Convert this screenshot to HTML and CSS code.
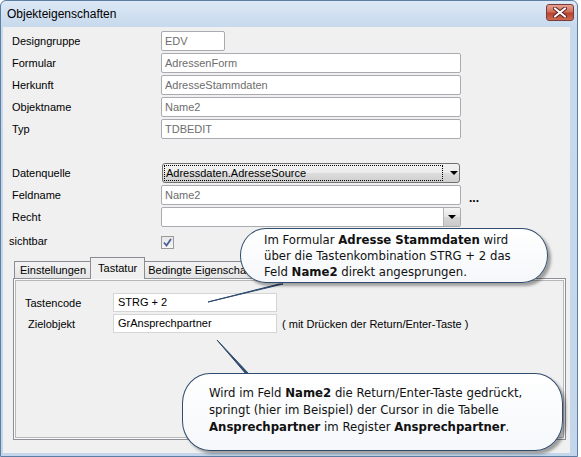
FILE: index.html
```html
<!DOCTYPE html>
<html>
<head>
<meta charset="utf-8">
<title>Objekteigenschaften</title>
<link rel="stylesheet" href="styles.css">
</head>
<body>
<div class="window">
  <div class="titlebar">
    <span class="title">Objekteigenschaften</span>
    <span class="close">
      <svg width="14" height="11" viewBox="0 0 14 11"><path d="M2 1.5 L12 9.5 M12 1.5 L2 9.5" stroke="#5a1e1e" stroke-width="4" stroke-linecap="round"/><path d="M2 1.5 L12 9.5 M12 1.5 L2 9.5" stroke="#fff" stroke-width="2.2" stroke-linecap="round"/></svg>
    </span>
  </div>
  <div class="client">
    <div class="form">
      <div class="row"><span class="lbl">Designgruppe</span><div class="field w64">EDV</div></div>
      <div class="row"><span class="lbl">Formular</span><div class="field w300">AdressenForm</div></div>
      <div class="row"><span class="lbl">Herkunft</span><div class="field w300">AdresseStammdaten</div></div>
      <div class="row"><span class="lbl">Objektname</span><div class="field w300">Name2</div></div>
      <div class="row"><span class="lbl">Typ</span><div class="field w300">TDBEDIT</div></div>
      <div class="row gapbefore"><span class="lbl">Datenquelle</span>
        <div class="combo">
          <span class="focus">Adressdaten.AdresseSource</span>
          <span class="arrow"></span>
        </div>
      </div>
      <div class="row"><span class="lbl">Feldname</span><div class="field w300">Name2</div><span class="dots">...</span></div>
      <div class="row"><span class="lbl">Recht</span>
        <div class="field w300 dropfield"><span class="dropbtn"><span class="arrow"></span></span></div>
      </div>
      <div class="row checkrow"><span class="lbl lbl-shift">sichtbar</span>
        <span class="check"><svg width="11" height="11" viewBox="0 0 11 11"><path d="M2 5.5 L4.5 8.5 L9 2" fill="none" stroke="#4b5f9a" stroke-width="1.8"/></svg></span>
      </div>
    </div>
    <div class="tabs">
      <span class="tab">Einstellungen</span>
      <span class="tab sel">Tastatur</span>
      <span class="tab">Bedingte Eigenschaften</span>
    </div>
    <div class="panel">
      <div class="prow"><span class="plbl">Tastencode</span><div class="pfield">STRG + 2</div></div>
      <div class="prow"><span class="plbl plbl-shift">Zielobjekt</span><div class="pfield">GrAnsprechpartner</div><span class="hint">( mit Drücken der Return/Enter-Taste )</span></div>
    </div>
  </div>
</div>
<svg class="tails" width="581" height="457" viewBox="0 0 581 457">
  <path d="M208 302 L279 284 L283 284 Z" fill="#2f4b6e" stroke="#2f4b6e" stroke-width="1"/>
  <path d="M217 340 L246 374 L249 374 Z" fill="#2f4b6e" stroke="#2f4b6e" stroke-width="1"/>
</svg>
<div class="callout c1">
  Im Formular <b>Adresse Stammdaten</b> wird<br>
  über die Tastenkombination STRG + 2 das<br>
  Feld <b>Name2</b> direkt angesprungen.
</div>
<div class="callout c2">
  Wird im Feld <b>Name2</b> die Return/Enter-Taste gedrückt,<br>
  springt (hier im Beispiel) der Cursor in die Tabelle<br>
  <b>Ansprechpartner</b> im Register <b>Ansprechpartner</b>.
</div>
</body>
</html>
```

FILE: styles.css
```css
* { box-sizing: border-box; }
html, body { margin: 0; padding: 0; }
body {
  width: 581px;
  height: 457px;
  background: #ffffff;
  font-family: "Liberation Sans", Arial, sans-serif;
  font-size: 11px;
  color: #000;
  position: relative;
  overflow: hidden;
}
.window {
  width: 578px;
  height: 457px;
  border: 1px solid #5d7ea3;
  border-radius: 6px 6px 0 0;
  background: linear-gradient(#dce8f5, #c7d9ed 26px, #c3d6eb);
  display: flex;
  flex-direction: column;
}
.titlebar {
  height: 26px;
  display: flex;
  align-items: center;
  justify-content: space-between;
  padding: 0 3px 0 6px;
}
.title { font-size: 12px; color: #000; }
.close {
  width: 28px;
  height: 17px;
  margin-top: -4px;
  border: 1px solid #7a3a3a;
  border-radius: 3px;
  background: linear-gradient(#e8a393, #d0705c 45%, #b8432f 55%, #cf6a50);
  display: flex;
  align-items: center;
  justify-content: center;
}
.client {
  margin: 0 7px 3px 2px;
  height: 426px;
  background: #f0f0f0;
}
.form {
  padding: 4px 0 0 9px;
  display: flex;
  flex-direction: column;
  gap: 2px;
}
.row { display: flex; align-items: center; height: 20px; }
.gapbefore { margin-top: 22px; }
.lbl { width: 149px; flex: none; }
.lbl-shift { margin-left: -3px; width: 152px; }
.field {
  height: 20px;
  border: 1px solid #a9abb0;
  border-radius: 2px;
  background: #fff;
  color: #6d6d6d;
  padding: 0 3px;
  line-height: 18px;
  white-space: nowrap;
}
.w64 { width: 64px; }
.w300 { width: 300px; }
.combo {
  width: 298px;
  height: 20px;
  margin-left: 1px;
  border: 1px solid #707070;
  border-radius: 3px;
  background: linear-gradient(#f2f2f2, #ebebeb 50%, #dddddd 51%, #cfcfcf);
  display: flex;
  align-items: center;
  padding: 0 0 0 1px;
}
.focus {
  width: 279px;
  height: 16px;
  border: 1px dotted #000;
  line-height: 14px;
  padding-left: 1px;
  white-space: nowrap;
}
.arrow {
  width: 0;
  height: 0;
  border-left: 4px solid transparent;
  border-right: 4px solid transparent;
  border-top: 4px solid #000;
  margin-left: 7px;
}
.dropfield { display: flex; justify-content: flex-end; padding: 0; }
.dropbtn {
  width: 17px;
  height: 18px;
  border-left: 1px solid #b5b5b5;
  background: linear-gradient(#f4f4f4, #e4e4e4 50%, #d6d6d6 51%, #cacaca);
  display: flex;
  align-items: center;
  justify-content: center;
}
.dropbtn .arrow { margin-left: 0; }
.dots {
  font-weight: bold;
  font-size: 12px;
  margin-left: 8px;
  align-self: flex-end;
  line-height: 12px;
  margin-bottom: 1px;
}
.checkrow { height: 24px; }
.check {
  width: 13px;
  height: 13px;
  margin-top: 2px;
  border: 1px solid #9a9a9a;
  background: linear-gradient(#e6e6e6, #f7f7f7);
  display: flex;
  align-items: center;
  justify-content: center;
}
.tabs {
  display: flex;
  align-items: flex-end;
  height: 21px;
  margin: 4px 0 0 11px;
  position: relative;
  z-index: 1;
}
.tab {
  height: 17px;
  border: 1px solid #898c95;
  border-bottom: none;
  background: linear-gradient(#f3f3f3, #e4e4e4);
  padding: 0 5px;
  line-height: 16px;
  white-space: nowrap;
}
.tab + .tab { margin-left: -1px; }
.tab.sel {
  height: 22px;
  margin-bottom: -1px;
  margin-left: -2px;
  margin-right: -2px;
  padding: 2px 7px 0;
  background: #f0f0f0;
  position: relative;
  z-index: 2;
}
.panel {
  margin-left: 10px;
  width: 553px;
  height: 162px;
  border: 1px solid #8e9098;
  box-shadow: inset 0 0 0 1px #fafafa, inset 0 0 0 2px #b8b8b8;
  background: #f0f0f0;
  padding: 14px 0 0 11px;
  display: flex;
  flex-direction: column;
  gap: 2px;
}
.prow { display: flex; align-items: center; height: 19px; }
.plbl { width: 88px; flex: none; }
.plbl-shift { padding-left: 3px; }
.pfield {
  width: 164px;
  height: 19px;
  border: 1px solid #d5d5d5;
  background: #fff;
  padding: 0 4px;
  line-height: 17px;
  white-space: nowrap;
}
.hint { margin-left: 5px; }
.tails { position: absolute; left: 0; top: 0; z-index: 9; }
.callout {
  position: absolute;
  z-index: 10;
  background: linear-gradient(#ffffff, #f5f7fa);
  border: 1.5px solid #2f4b6e;
  box-shadow: 3px 3px 3px rgba(0,0,0,0.35);
  font-family: "DejaVu Sans Condensed", "DejaVu Sans", sans-serif;
  font-size: 13px;
  color: #111;
  white-space: nowrap;
}
.c1 {
  left: 240px;
  top: 228px;
  width: 308px;
  height: 55px;
  border-radius: 26px / 27px;
  padding: 3px 0 0 23px;
  line-height: 16px;
}
.c2 {
  left: 182px;
  top: 373px;
  width: 381px;
  height: 78px;
  border-radius: 28px / 30px;
  padding: 10px 0 0 26px;
  line-height: 17px;
}
```
